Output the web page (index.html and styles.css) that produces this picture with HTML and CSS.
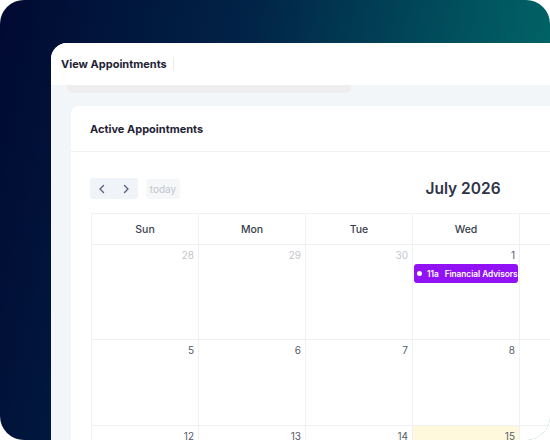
FILE: index.html
```html
<!DOCTYPE html>
<html lang="en">

<head>
  <meta charset="UTF-8" />
  <title>View Appointments</title>
  <link rel="stylesheet" href="styles.css">
</head>

<body>
  <div class="frame">
    <div class="window">
      <div class="topbar">
        <div class="page-title">View Appointments</div>
        <div class="topbar-sep"></div>
      </div>

      <div class="content">
        <div class="scroll-pill"></div>

        <div class="card">
          <div class="card-head">Active Appointments</div>

          <div class="card-body">
            <div class="toolbar">
              <div class="tb-left">
                <div class="nav-group">
                  <button class="nav-btn" aria-label="prev">
                    <svg width="8" height="10" viewBox="0 0 8 10"><path d="M5.5 1.5 2 5l3.5 3.5" fill="none" stroke="#59627a" stroke-width="1.4" stroke-linecap="round" stroke-linejoin="round"/></svg>
                  </button>
                  <button class="nav-btn" aria-label="next">
                    <svg width="8" height="10" viewBox="0 0 8 10"><path d="M2.5 1.5 6 5 2.5 8.5" fill="none" stroke="#59627a" stroke-width="1.4" stroke-linecap="round" stroke-linejoin="round"/></svg>
                  </button>
                </div>
                <button class="today-btn">today</button>
              </div>
              <div class="month-title">July 2026</div>
              <div class="tb-right"></div>
            </div>

            <div class="calendar">
              <div class="cal-row head-row">
                <div class="head-cell">Sun</div>
                <div class="head-cell">Mon</div>
                <div class="head-cell">Tue</div>
                <div class="head-cell">Wed</div>
                <div class="head-cell">Thu</div>
                <div class="head-cell">Fri</div>
                <div class="head-cell">Sat</div>
              </div>

              <div class="cal-row week week-first">
                <div class="day other"><span class="num">28</span></div>
                <div class="day other"><span class="num">29</span></div>
                <div class="day other"><span class="num">30</span></div>
                <div class="day">
                  <span class="num">1</span>
                  <div class="event"><span class="dot"></span><span class="ev-time">11a</span><span class="ev-title">Financial Advisors</span></div>
                </div>
                <div class="day"><span class="num">2</span></div>
                <div class="day"><span class="num">3</span></div>
                <div class="day"><span class="num">4</span></div>
              </div>

              <div class="cal-row week">
                <div class="day"><span class="num">5</span></div>
                <div class="day"><span class="num">6</span></div>
                <div class="day"><span class="num">7</span></div>
                <div class="day"><span class="num">8</span></div>
                <div class="day"><span class="num">9</span></div>
                <div class="day"><span class="num">10</span></div>
                <div class="day"><span class="num">11</span></div>
              </div>

              <div class="cal-row week">
                <div class="day"><span class="num">12</span></div>
                <div class="day"><span class="num">13</span></div>
                <div class="day"><span class="num">14</span></div>
                <div class="day today"><span class="num">15</span></div>
                <div class="day"><span class="num">16</span></div>
                <div class="day"><span class="num">17</span></div>
                <div class="day"><span class="num">18</span></div>
              </div>
            </div>
          </div>
        </div>
      </div>
    </div>
  </div>
</body>

</html>
```

FILE: styles.css
```css
body {
  margin: 0;
  background: #ffffff;
  font-family: "Inter", "Noto Sans", sans-serif;
}

.frame {
  width: 550px;
  height: 440px;
  box-sizing: border-box;
  padding: 43px 0 0 51px;
  border-radius: 24px;
  overflow: hidden;
  background: linear-gradient(102deg, #010932 0%, #012447 40%, #01505e 72%, #00736c 100%);
}

.window {
  width: 860px;
  height: 520px;
  background: #f3f6f9;
  border-top-left-radius: 16px;
  overflow: hidden;
}

.topbar {
  height: 42px;
  background: #ffffff;
  display: flex;
  align-items: center;
  padding-left: 10px;
}

.page-title {
  font-size: 11px;
  font-weight: 700;
  color: #1f2336;
}

.topbar-sep {
  width: 1px;
  height: 14px;
  background: #ececef;
  margin-left: 6px;
}

.content {
  padding-left: 16px;
}

.scroll-pill {
  width: 284px;
  height: 8px;
  background: #eeeeef;
  border-radius: 0 0 6px 6px;
}

.card {
  margin: 13px 0 0 4px;
  background: #ffffff;
  border-radius: 8px 0 0 0;
}

.card-head {
  height: 45px;
  display: flex;
  align-items: center;
  padding-left: 19px;
  font-size: 11px;
  font-weight: 700;
  color: #1f2336;
  border-bottom: 1px solid #eff1f4;
}

.card-body {
  padding: 26px 0 0 19px;
}

.toolbar {
  width: 746px;
  display: grid;
  grid-template-columns: 1fr auto 1fr;
  align-items: center;
  margin-bottom: 14px;
}

.tb-left {
  display: flex;
  align-items: center;
  gap: 8px;
}

.nav-group {
  display: flex;
  background: #f0f4f8;
  border-radius: 3px;
  height: 21px;
  width: 48px;
}

.nav-btn {
  flex: 1;
  border: 0;
  background: transparent;
  padding: 0;
  display: flex;
  align-items: center;
  justify-content: center;
}

.today-btn {
  border: 0;
  background: #f5f7f9;
  border-radius: 3px;
  height: 20px;
  width: 34px;
  padding: 0;
  font-family: inherit;
  font-size: 10px;
  color: #c3c6ce;
}

.month-title {
  font-size: 15.5px;
  font-weight: 600;
  color: #2f3447;
}

.calendar {
  width: 749px;
  margin-left: 1px;
  border-top: 1px solid #eff1f4;
  border-left: 1px solid #eff1f4;
}

.cal-row {
  display: grid;
  grid-template-columns: repeat(7, 107px);
}

.head-cell {
  height: 30px;
  display: flex;
  align-items: center;
  justify-content: center;
  font-size: 10.5px;
  font-weight: 500;
  color: #3a3f4f;
  border-right: 1px solid #eff1f4;
  border-bottom: 1px solid #eff1f4;
}

.week .day {
  height: 85px;
  border-right: 1px solid #eff1f4;
  border-bottom: 1px solid #eff1f4;
  display: flex;
  flex-direction: column;
  align-items: flex-end;
}

.week-first .day {
  height: 94px;
}

.num {
  font-size: 10px;
  color: #555b68;
  padding: 4px 4px 0 0;
  line-height: 12px;
}

.day.other .num {
  color: #c4c6cc;
}

.day.today {
  background: #fef8dc;
}

.event {
  align-self: stretch;
  margin: 3px 1px 0 1px;
  height: 19px;
  background: #9012f5;
  border-radius: 3px;
  display: flex;
  align-items: center;
  padding-left: 3px;
  font-size: 8.3px;
  font-weight: 600;
  letter-spacing: -0.05px;
  color: #ffffff;
  white-space: nowrap;
  overflow: hidden;
}

.dot {
  flex-shrink: 0;
  width: 5px;
  height: 5px;
  border-radius: 50%;
  background: #ffffff;
  margin-right: 5px;
}

.ev-time {
  margin-right: 6px;
}
```
